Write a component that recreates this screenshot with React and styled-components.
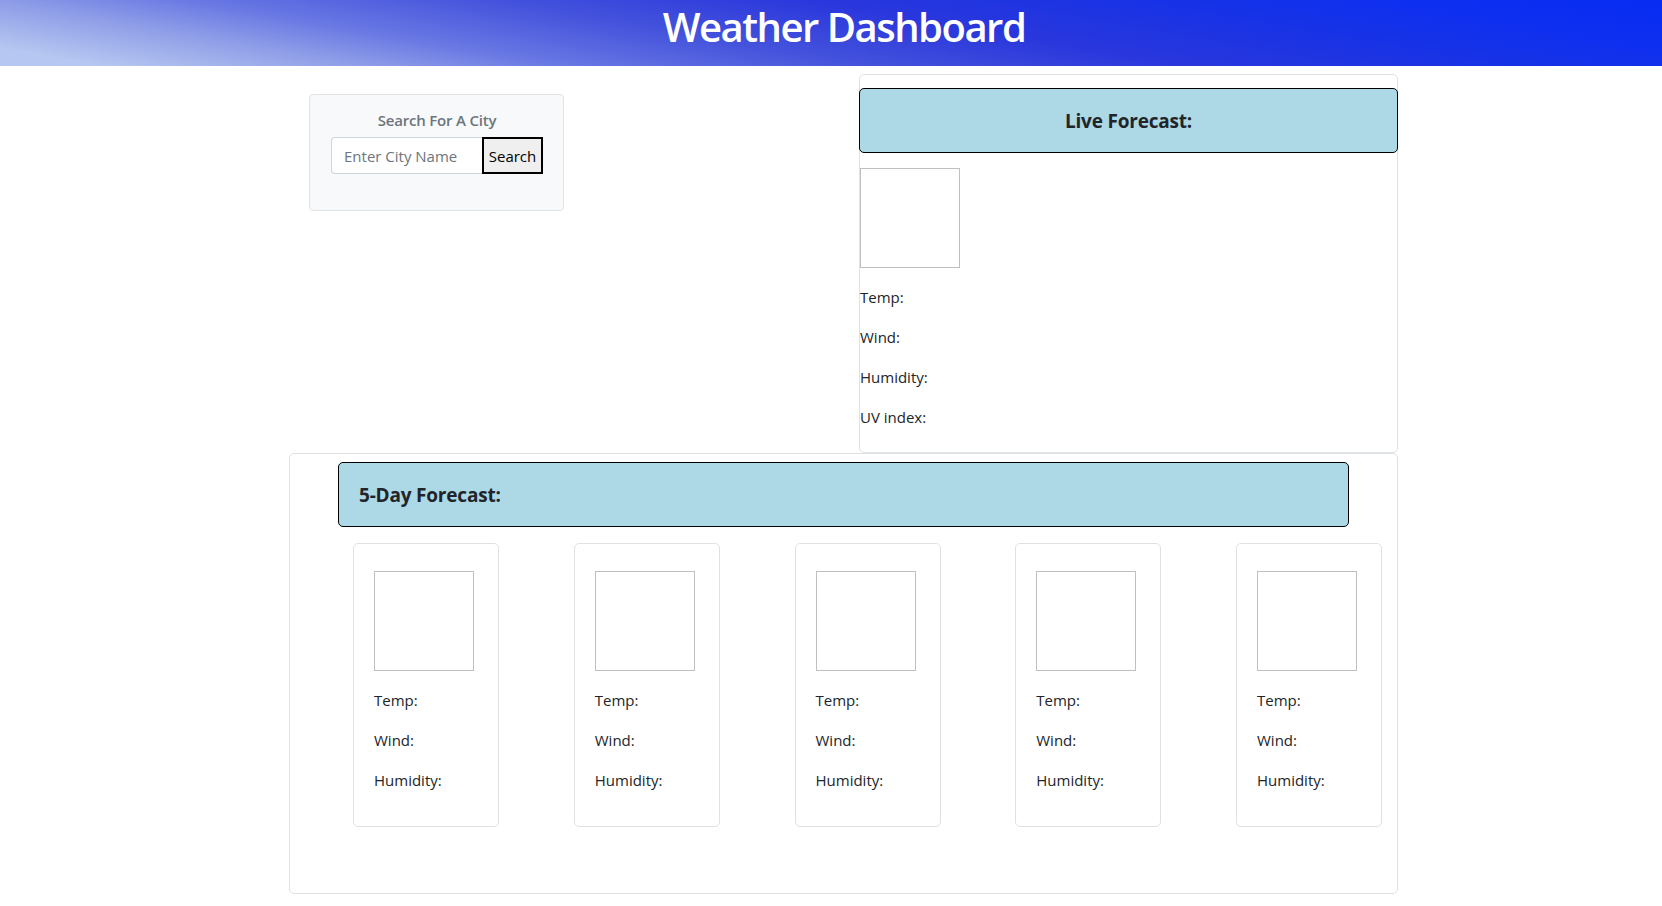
import styled, { createGlobalStyle } from 'styled-components';

const GlobalStyle = createGlobalStyle`
  * {
    box-sizing: border-box;
  }
  body {
    margin: 0;
    background: #fff;
    color: #212529;
    font-family: 'Open Sans', 'Noto Sans', sans-serif;
    font-size: 16px;
    line-height: 24px;
  }
`;

export const TopBar = styled.header`
  height: 66px;
  padding-left: 26px;
  background: linear-gradient(
    10deg,
    #b6c7f1 5%,
    #8e9de7 18%,
    #6877e3 28%,
    #4554dc 42%,
    #2a37dc 58%,
    #1a33e4 72%,
    #0c2ff0 88%,
    #082cf3 100%
  );
  display: flex;
  justify-content: center;
  align-items: flex-start;
`;

export const PageTitle = styled.h1`
  margin: 0;
  padding-top: 3px;
  color: #fff;
  font-size: 40px;
  font-weight: 600;
  line-height: 48px;
  letter-spacing: -1.5px;
`;

export const MainContainer = styled.main`
  width: 1109px;
  margin-left: 289px;
`;

export const TopRow = styled.div`
  display: grid;
  grid-template-columns: 570px 539px;
  margin-top: 8px;
`;

export const SearchColumn = styled.div`
  padding: 20px 0 0 20px;
`;

export const SearchCard = styled.div`
  width: 255px;
  height: 117px;
  padding: 13px 20px 0 21px;
  background: #f8f9fa;
  border: 1px solid #e1e4e7;
  border-radius: 4px;
`;

export const SearchTitle = styled.div`
  text-align: center;
  color: #6c757d;
  font-size: 15px;
  font-weight: 600;
  line-height: 24px;
  margin-bottom: 5px;
  letter-spacing: -0.2px;
`;

export const SearchRow = styled.div`
  display: flex;
  height: 37px;
`;

export const CityInput = styled.input`
  width: 151px;
  height: 37px;
  padding: 0 12px;
  border: 1px solid #ced4da;
  border-right: none;
  border-radius: 4px 0 0 4px;
  background: #fff;
  font-family: inherit;
  font-size: 15px;
  color: #212529;
  outline: none;

  &::placeholder {
    color: #6c757d;
  }
`;

export const SearchButton = styled.button`
  width: 62px;
  height: 37px;
  padding: 0;
  border: 2px solid #000;
  background: #efefef;
  color: #000;
  font-family: inherit;
  font-size: 15px;
  cursor: pointer;
`;

export const Panel = styled.section`
  border: 1px solid #dfe2e5;
  border-radius: 5px;
  background: #fff;
`;

export const LivePanel = styled(Panel)`
  padding: 13px 0 7px;
`;

export const ForecastPanel = styled(Panel)`
  padding: 8px 0 66px;
`;

export const Banner = styled.div`
  height: 65px;
  margin: ${(p) => (p.$inset ? '0 48px' : '0 -1px')};
  padding: 0 20px;
  display: flex;
  align-items: center;
  justify-content: ${(p) => (p.$center ? 'center' : 'flex-start')};
  background: #add8e6;
  border: 1px solid #000;
  border-radius: 5px;
`;

export const BannerTitle = styled.h2`
  margin: 0;
  font-size: 19px;
  font-weight: 700;
  line-height: 24px;
  color: #212529;
  letter-spacing: -0.2px;
`;

export const IconBox = styled.div`
  width: 100px;
  height: 100px;
  border: 1px solid #c0c0c0;
  margin-top: ${(p) => p.$top || 0}px;
  margin-bottom: 17px;
`;

export const Stat = styled.p`
  margin: 0 0 16px;
  font-size: 15px;
  line-height: 24px;
  color: #212529;
`;

export const DayRow = styled.div`
  display: flex;
  justify-content: space-between;
  margin-top: 16px;
  padding: 0 15px 0 63px;
`;

export const DayCard = styled.div`
  width: 146px;
  height: 284px;
  padding: 27px 20px 0;
  border: 1px solid #dfe2e5;
  border-radius: 5px;
`;

const days = [1, 2, 3, 4, 5];

export default function App() {
  return (
    <>
      <GlobalStyle />
      <TopBar>
        <PageTitle>Weather Dashboard</PageTitle>
      </TopBar>
      <MainContainer>
        <TopRow>
          <SearchColumn>
            <SearchCard>
              <SearchTitle>Search For A City</SearchTitle>
              <SearchRow>
                <CityInput placeholder="Enter City Name" />
                <SearchButton>Search</SearchButton>
              </SearchRow>
            </SearchCard>
          </SearchColumn>
          <LivePanel>
            <Banner $center>
              <BannerTitle>Live Forecast:</BannerTitle>
            </Banner>
            <IconBox $top={15} />
            <Stat>Temp:</Stat>
            <Stat>Wind:</Stat>
            <Stat>Humidity:</Stat>
            <Stat>UV index:</Stat>
          </LivePanel>
        </TopRow>
        <ForecastPanel>
          <Banner $inset>
            <BannerTitle>5-Day Forecast:</BannerTitle>
          </Banner>
          <DayRow>
            {days.map((d) => (
              <DayCard key={d}>
                <IconBox />
                <Stat>Temp:</Stat>
                <Stat>Wind:</Stat>
                <Stat>Humidity:</Stat>
              </DayCard>
            ))}
          </DayRow>
        </ForecastPanel>
      </MainContainer>
    </>
  );
}
